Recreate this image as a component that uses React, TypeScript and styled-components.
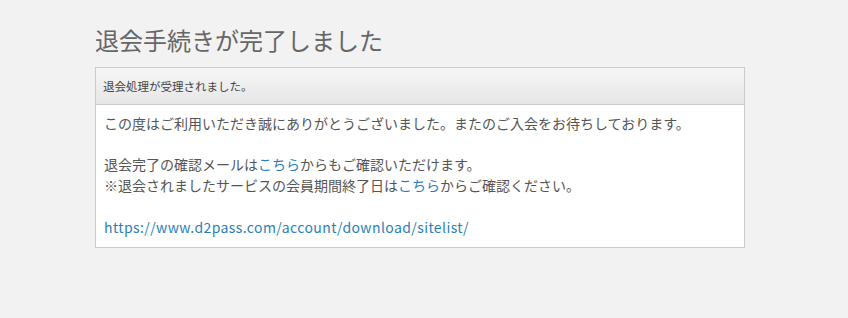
import React from "react";
import styled, { createGlobalStyle } from "styled-components";

const Global = createGlobalStyle`
  html, body { margin: 0; padding: 0; background: #f2f2f2; }
  body { font-family: "Noto Sans CJK JP", "Noto Sans", sans-serif; }
`;

const Page = styled.div`
  padding: 24px 0 0 95px;
  width: 650px;
`;

const Title = styled.h1`
  margin: 0 0 12px 0;
  font-size: 24px;
  line-height: 31px;
  font-weight: normal;
  color: #666;
`;

const Panel = styled.section`
  box-sizing: border-box;
  width: 650px;
  border: 1px solid #cccccc;
  background: #fff;
`;

const PanelHeader = styled.div`
  height: 36px;
  display: flex;
  align-items: center;
  padding: 0 7px;
  font-size: 11.5px;
  color: #444;
  background: linear-gradient(#f6f6f6, #e6e6e6);
  border-bottom: 1px solid #cccccc;
`;

const PanelBody = styled.div`
  padding: 8px 8px 9px 8px;
  font-size: 14px;
  line-height: 21px;
  color: #555;
`;

const Para = styled.p`
  margin: 0;
`;

const Spacer = styled.div<{ $h: number }>`
  height: ${(p) => p.$h}px;
`;

const Link = styled.a`
  color: #2a7fba;
  text-decoration: none;
`;

const Url = styled(Link)`
  letter-spacing: 0.4px;
`;

export default function App() {
  return (
    <>
      <Global />
      <Page>
        <Title>退会手続きが完了しました</Title>
        <Panel>
          <PanelHeader>退会処理が受理されました。</PanelHeader>
          <PanelBody>
            <Para>この度はご利用いただき誠にありがとうございました。またのご入会をお待ちしております。</Para>
            <Spacer $h={20} />
            <Para>
              退会完了の確認メールは<Link href="#">こちら</Link>からもご確認いただけます。
            </Para>
            <Para>
              ※退会されましたサービスの会員期間終了日は<Link href="#">こちら</Link>からご確認ください。
            </Para>
            <Spacer $h={21} />
            <Para>
              <Url href="#">https://www.d2pass.com/account/download/sitelist/</Url>
            </Para>
          </PanelBody>
        </Panel>
      </Page>
    </>
  );
}
